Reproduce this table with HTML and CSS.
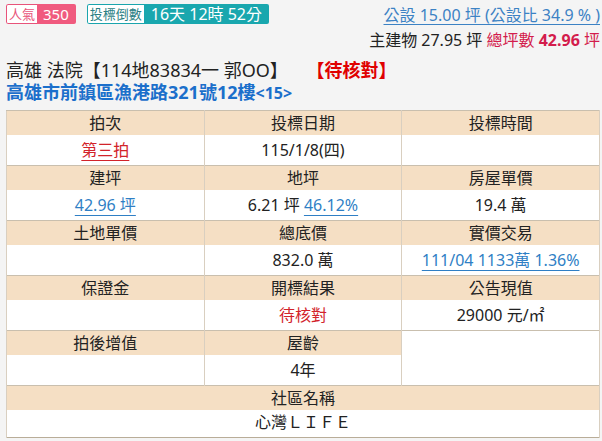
FILE: index.html
```html
<!DOCTYPE html>
<html lang="zh-Hant">
<head>
<meta charset="utf-8">
<link rel="stylesheet" href="styles.css">
</head>
<body>
<div class="page">
  <div class="top">
    <div class="badges">
      <span class="badge pink"><span class="lbl">人氣</span><span class="val">350</span></span>
      <span class="badge teal"><span class="lbl">投標倒數</span><span class="val">16天 12時 52分</span></span>
    </div>
    <div class="areas">
      <a class="public">公設 15.00 坪 (公設比 34.9 % )</a>
      <div class="main">主建物 27.95 坪 <span class="total">總坪數 <b>42.96</b> 坪</span></div>
    </div>
  </div>
  <div class="title">高雄 法院【114地83834一 郭OO】 <span class="status">【待核對】</span></div>
  <div class="addr">高雄市前鎮區漁港路321號12樓<span class="floor">&lt;15&gt;</span></div>
  <table class="info">
    <tr class="h"><td>拍次</td><td>投標日期</td><td>投標時間</td></tr>
    <tr class="v"><td><a class="red u">第三拍</a></td><td>115/1/8(四)</td><td></td></tr>
    <tr class="h"><td>建坪</td><td>地坪</td><td>房屋單價</td></tr>
    <tr class="v"><td><a class="blue u">42.96 坪</a></td><td>6.21 坪 <a class="blue u">46.12%</a></td><td>19.4 萬</td></tr>
    <tr class="h"><td>土地單價</td><td>總底價</td><td>實價交易</td></tr>
    <tr class="v"><td></td><td>832.0 萬</td><td><a class="blue u">111/04 1133萬 1.36%</a></td></tr>
    <tr class="h"><td>保證金</td><td>開標結果</td><td>公告現值</td></tr>
    <tr class="v"><td></td><td><span class="red">待核對</span></td><td>29000 元/㎡</td></tr>
    <tr class="h"><td>拍後增值</td><td>屋齡</td><td class="blank" rowspan="2"></td></tr>
    <tr class="v"><td></td><td>4年</td></tr>
    <tr class="h"><td colspan="3">社區名稱</td></tr>
    <tr class="v last"><td colspan="3">心灣ＬＩＦＥ</td></tr>
  </table>
</div>
</body>
</html>
```
FILE: styles.css
```css
html, body {
  margin: 0;
  padding: 0;
  background: #f4f4f4;
}
body {
  font-family: "Noto Sans", "Noto Sans CJK TC", sans-serif;
  color: #222;
}
.page {
  padding: 4px 2px 0 6px;
}
.top {
  display: flex;
  justify-content: space-between;
  align-items: flex-start;
}
.badges {
  display: flex;
  gap: 11px;
}
.badge {
  display: flex;
  height: 20px;
  border-radius: 2px;
  overflow: hidden;
  box-sizing: border-box;
}
.badge .lbl {
  background: #fff;
  font-size: 13px;
  line-height: 18px;
  padding: 0 2px;
  border: 1px solid;
  border-right: none;
  border-radius: 2px 0 0 2px;
}
.badge .val {
  color: #fff;
  line-height: 20px;
  padding: 0 6px;
}
.pink .lbl { color: #e8537a; border-color: #e8537a; }
.pink .val { background: #f05a7e; font-size: 15px; padding: 0 7px 0 6px; }
.teal .lbl { color: #2b7f84; border-color: #1aa5ad; }
.teal .val { background: #19a7ae; font-size: 16px; padding: 0 7px 0 7px; }
.areas {
  text-align: right;
  font-size: 16px;
  line-height: 22px;
  margin-top: 0;
}
.public {
  color: #3c82c4;
  text-decoration: underline;
  text-underline-offset: 3px;
}
.main {
  margin-top: 3px;
}
.total { color: #d31c4c; }
.total b { font-weight: bold; }
.title {
  font-size: 18px;
  line-height: 22px;
  margin-top: 8px;
  color: #222;
}
.status {
  color: #e00000;
  font-weight: bold;
  margin-left: 14px;
}
.addr {
  color: #1b6fcb;
  font-weight: bold;
  font-size: 18px;
  line-height: 22px;
}
.floor { font-size: 16px; }
.info {
  width: 594px;
  margin-top: 6px;
  border-collapse: collapse;
  border: 1px solid #b9ad98;
  table-layout: fixed;
  font-size: 16px;
  line-height: 20px;
  background: #fff;
}
.info td {
  text-align: center;
  border-left: 1px solid #d9cfc0;
  border-right: 1px solid #d9cfc0;
  padding: 0;
}
.info tr.h td {
  background: #f5dfc4;
  height: 24px;
  border-top: 1px solid #c9bfae;
}
.info tr.v td {
  background: #fff;
  height: 30px;
}
.info tr.v.last td {
  height: 24px;
  padding-bottom: 3px;
}
.info td.blank { background: #fff !important; }
.red { color: #d2232a; }
.blue { color: #2f7fc5; }
.u {
  text-decoration: underline;
  text-underline-offset: 4px;
}
```
